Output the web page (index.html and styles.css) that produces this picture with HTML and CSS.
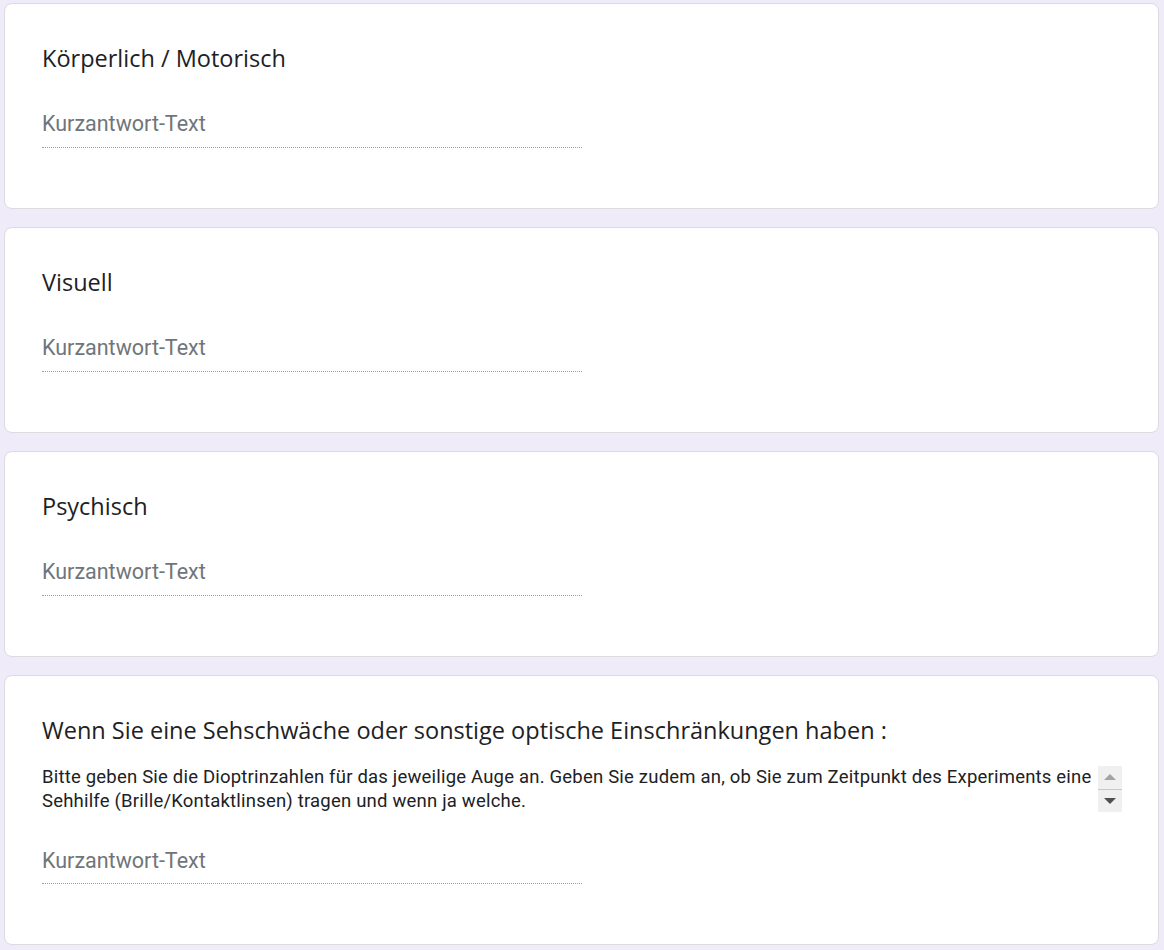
FILE: index.html
```html
<!DOCTYPE html>
<html lang="de">
<head>
<meta charset="utf-8">
<title>Formular</title>
<link rel="stylesheet" href="styles.css">
</head>
<body>
<main class="form">
  <section class="card">
    <div class="title">Körperlich / Motorisch</div>
    <div class="field"><span class="placeholder">Kurzantwort-Text</span></div>
  </section>
  <section class="card">
    <div class="title">Visuell</div>
    <div class="field"><span class="placeholder">Kurzantwort-Text</span></div>
  </section>
  <section class="card">
    <div class="title">Psychisch</div>
    <div class="field"><span class="placeholder">Kurzantwort-Text</span></div>
  </section>
  <section class="card">
    <div class="title">Wenn Sie eine Sehschwäche oder sonstige optische Einschränkungen haben :</div>
    <div class="desc">
      <div class="desc-text">Bitte geben Sie die Dioptrinzahlen für das jeweilige Auge an. Geben Sie zudem an, ob Sie zum Zeitpunkt des Experiments eine Sehhilfe (Brille/Kontaktlinsen) tragen und wenn ja welche.</div>
      <div class="scrollbar">
        <div class="sb-btn sb-up"><span class="tri-up"></span></div>
        <div class="sb-btn sb-down"><span class="tri-down"></span></div>
      </div>
    </div>
    <div class="field field-after-desc"><span class="placeholder">Kurzantwort-Text</span></div>
  </section>
</main>
</body>
</html>
```

FILE: styles.css
```css
html, body {
  margin: 0;
  padding: 0;
}
body {
  background: #efebf8;
  font-family: Roboto, "Liberation Sans", sans-serif;
}
.form {
  display: flex;
  flex-direction: column;
  gap: 18px;
  padding: 3px 5px 0 4px;
}
.card {
  background: #fff;
  border: 1px solid #dadce0;
  border-radius: 8px;
  padding: 39px 38px 60px 37px;
}
.title {
  font-family: "Open Sans", "Noto Sans", sans-serif;
  font-size: 23.5px;
  line-height: 30px;
  color: #202124;
}
.field {
  margin-top: 39px;
  width: 540px;
  padding-bottom: 11px;
  border-bottom: 1px dotted #9aa0a6;
}
.field-after-desc {
  margin-top: 36px;
  padding-bottom: 10px;
}
.placeholder {
  display: block;
  font-size: 21.5px;
  line-height: 24px;
  color: #70757a;
}
.desc {
  margin-top: 20px;
  display: flex;
  align-items: flex-start;
  margin-right: -2px;
}
.desc-text {
  flex: 1;
  font-size: 18.5px;
  line-height: 24px;
  color: #202124;
  letter-spacing: 0.2px;
}
.scrollbar {
  width: 24px;
  height: 46px;
  margin-top: 1px;
  background: #f0f0f0;
  display: flex;
  flex-direction: column;
}
.sb-btn {
  flex: 1;
  display: flex;
  align-items: center;
  justify-content: center;
}
.sb-up {
  border-bottom: 1px solid #c8c8c8;
}
.tri-up {
  width: 0;
  height: 0;
  border-left: 6px solid transparent;
  border-right: 6px solid transparent;
  border-bottom: 6px solid #a3a3a3;
}
.tri-down {
  width: 0;
  height: 0;
  border-left: 6px solid transparent;
  border-right: 6px solid transparent;
  border-top: 6px solid #505050;
}
```
